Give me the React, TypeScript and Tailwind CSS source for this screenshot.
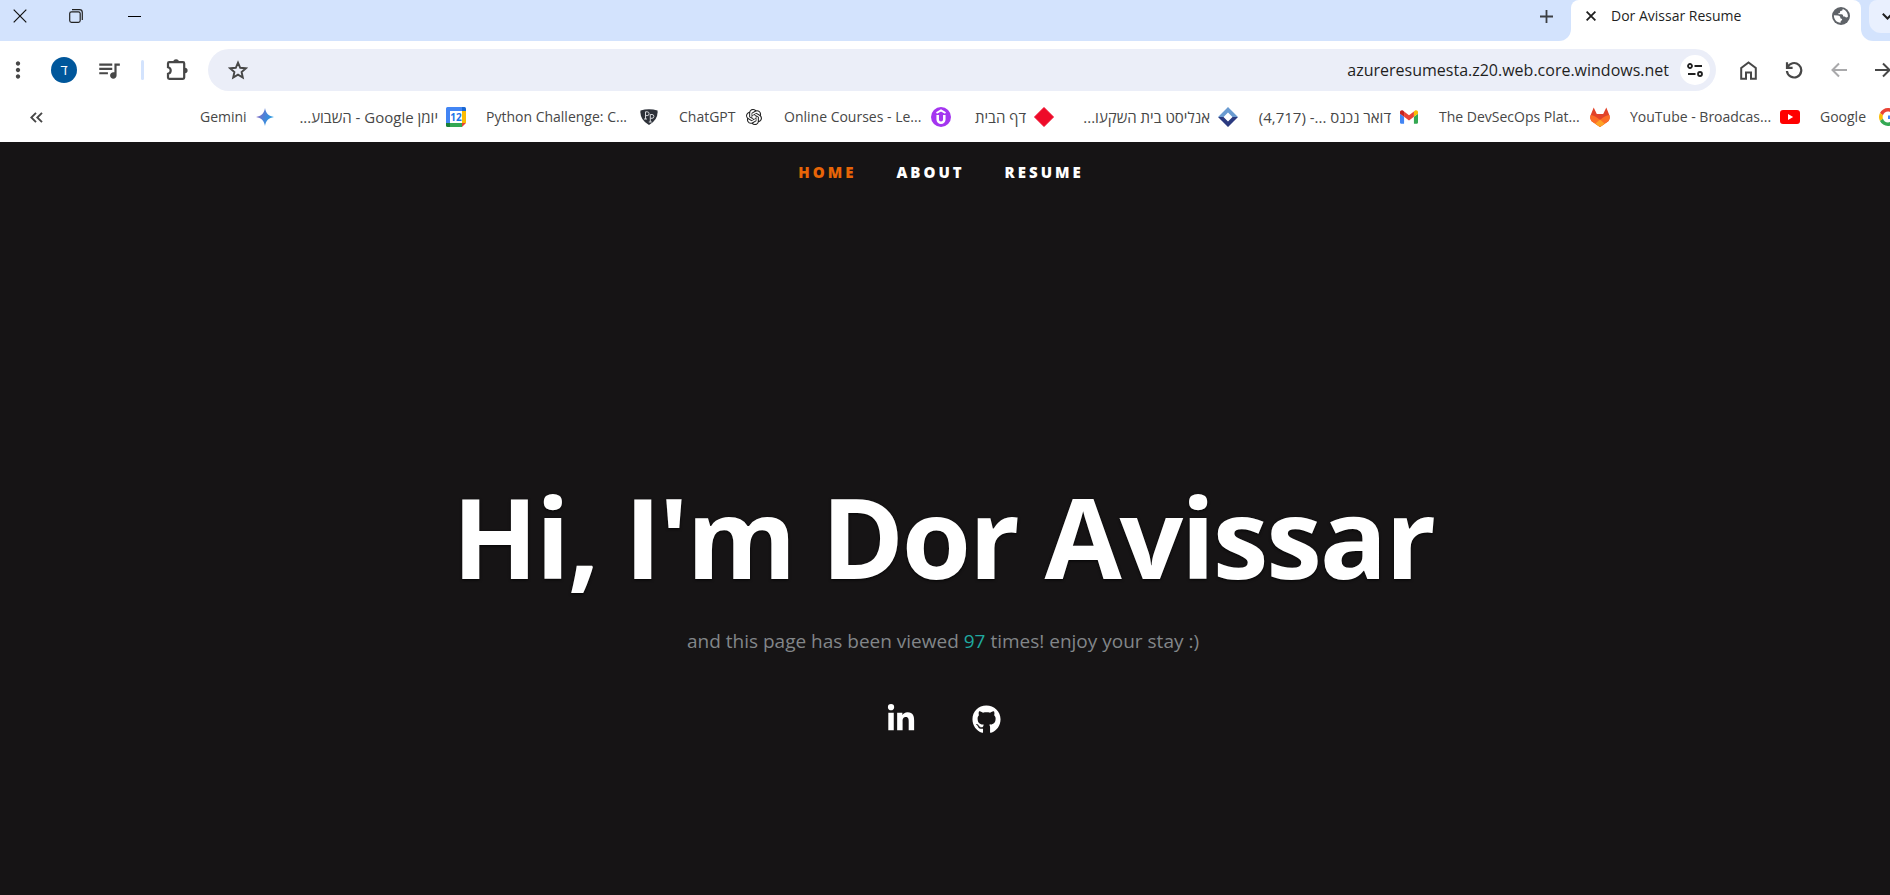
import type { ReactNode } from 'react';
import { FaGithub, FaLinkedinIn } from 'react-icons/fa';
import { MdMoreVert, MdQueueMusic } from 'react-icons/md';
import { SiOpenai } from 'react-icons/si';

function WindowControls() {
  return (
    <div className="flex h-8 items-center">
      <button aria-label="Close window" className="flex h-8 w-10 items-center justify-center">
        <svg width="14" height="14" viewBox="0 0 14 14" fill="none" stroke="#111" strokeWidth="1.2">
          <path d="M.7.7l12.6 12.6M13.3.7L.7 13.3" />
        </svg>
      </button>
      <button aria-label="Restore window" className="ml-4 flex h-8 w-10 items-center justify-center">
        <svg width="14" height="14" viewBox="0 0 14 14" fill="none" stroke="#222" strokeWidth="1.2">
          <rect x=".7" y="2.8" width="10.5" height="10.5" rx="1.8" />
          <path d="M3 .7h7.5a2.8 2.8 0 0 1 2.8 2.8V11" />
        </svg>
      </button>
      <button aria-label="Minimize window" className="ml-4 flex h-8 w-11 items-center justify-center">
        <span className="h-px w-[13px] bg-black" />
      </button>
    </div>
  );
}

function GlobeIcon() {
  return (
    <svg width="18" height="18" viewBox="0 0 18 18">
      <circle cx="9" cy="9" r="9" fill="#5f6368" />
      <path
        fill="#fff"
        d="M10.6 1.9c.2 1-.3 1.8-1.2 1.9-1 .1-1.5.6-1.4 1.4.1.7-.7 1-1.4 1.1-.6.1-.5.8.2.9h2.7c1.3 0 1.5.9 1.6 1.7.1.7.8.6 1.5.7.7.1.8.9 1.5 1 .7.1 1.2-.3 1.8-.8.4-2.9-1.5-6.9-5.3-7.9zM1.9 8.3l3.9.1c1.7.1 2.6.9 2.5 2.2 0 .9.5 1.1 1.2 1.1.9.1.8 1.3.1 1.7-.8.4-1.1 1-1 2.4C4.7 15.7 1.7 12.3 1.9 8.3z"
      />
    </svg>
  );
}

function TabStrip() {
  return (
    <div className="flex h-[41px] bg-white">
      <div className="flex flex-1 justify-between rounded-br-xl bg-[#d3e3fd]">
        <WindowControls />
        <button aria-label="New tab" className="mr-4 flex h-8 w-[18px] items-center justify-center">
          <svg width="13" height="13" viewBox="0 0 13 13" stroke="#3c3f43" strokeWidth="1.8">
            <path d="M6.5 0v13M0 6.5h13" />
          </svg>
        </button>
      </div>
      <div className="w-[290px] bg-[linear-gradient(#d3e3fd_50%,#fff_50%)]">
        <div className="flex h-full items-start rounded-t-lg bg-white pr-[11px] pl-[15px]">
          <button aria-label="Close tab" className="flex h-8 w-[10px] items-center justify-center">
            <svg width="10" height="10" viewBox="0 0 10 10" stroke="#1f1f1f" strokeWidth="1.8">
              <path d="M.6.6l8.8 8.8M9.4.6L.6 9.4" />
            </svg>
          </button>
          <span className="ml-[15px] flex-1 text-sm leading-8 text-[#1f1f1f]">Dor Avissar Resume</span>
          <span className="flex h-8 items-center">
            <GlobeIcon />
          </span>
        </div>
      </div>
      <div className="w-[29px] overflow-hidden rounded-bl-xl bg-[#d3e3fd] pl-2">
        <button aria-label="Search tabs" className="flex h-[33px] w-9 items-center justify-center rounded-xl rounded-t-lg bg-[#e9f0fe]">
          <svg width="11" height="7" viewBox="0 0 11 7" fill="none" stroke="#1f1f1f" strokeWidth="2">
            <path d="M.8.8l4.7 4.7L10.2.8" />
          </svg>
        </button>
      </div>
    </div>
  );
}

function ExtensionsIcon() {
  return (
    <svg width="22" height="22" viewBox="0 0 22 22">
      <path
        d="M3.2 3.2H17a1.2 1.2 0 0 1 1.2 1.2v14.2a1.2 1.2 0 0 1-1.2 1.2H3.2A1.2 1.2 0 0 1 2 18.6v-3.8c3.6-.8 3.6-5.8 0-6.6V4.4a1.2 1.2 0 0 1 1.2-1.2z"
        fill="none"
        stroke="#474747"
        strokeWidth="2.2"
      />
      <path d="M7.3 3a2.8 2.8 0 0 1 5.6 0zM18.8 8.7a2.8 2.8 0 0 1 0 5.6z" fill="#474747" />
    </svg>
  );
}

function Toolbar() {
  return (
    <div className="flex h-[58px] items-center overflow-hidden text-[#474747]">
      <button aria-label="Menu" className="ml-[6px] flex w-6 justify-center">
        <MdMoreVert size={26} className="shrink-0" />
      </button>
      <button
        aria-label="Profile"
        className="ml-[21px] flex size-[26px] shrink-0 items-center justify-center rounded-full bg-[#00579b] text-sm text-white"
      >
        ד
      </button>
      <button aria-label="Media" className="ml-5 flex w-6 justify-center">
        <MdQueueMusic size={26} className="shrink-0" />
      </button>
      <span className="ml-5 h-5 w-[3px] rounded-full bg-[#d3e3fd]" />
      <button aria-label="Extensions" className="ml-[22px]">
        <ExtensionsIcon />
      </button>
      <div className="ml-5 flex h-[42px] flex-1 items-center rounded-full bg-[#ebeef8] pr-[6px] pl-5">
        <button aria-label="Bookmark this page">
          <svg width="20" height="20" viewBox="0 0 20 20" fill="none" stroke="#474747" strokeWidth="1.9">
            <path d="M10 2.6l2.2 5.2 5.6.5-4.2 3.700 1.200 5.500L10 14.600l-4.800 2.900 1.200-5.500L2.200 8.300l5.600-.5z" />
          </svg>
        </button>
        <input
          aria-label="Address"
          dir="ltr"
          defaultValue="azureresumesta.z20.web.core.windows.net"
          className="mr-[11px] min-w-0 flex-1 bg-transparent text-right text-base text-[#1f1f1f] outline-none"
        />
        <button aria-label="Site information" className="flex size-[30px] items-center justify-center rounded-full bg-white">
          <svg width="16" height="14" viewBox="0 0 16 14" fill="none" stroke="#1f1f1f" strokeWidth="1.8">
            <circle cx="3" cy="3" r="2" />
            <path d="M7.5 3H15M1 11h7.5" />
            <circle cx="13" cy="11" r="2" />
          </svg>
        </button>
      </div>
      <div className="-mr-px ml-6 flex items-center gap-7">
        <button aria-label="Home">
          <svg width="17" height="19" viewBox="0 0 17 19" fill="none" stroke="#474747" strokeWidth="2">
            <path d="M1.2 7L8.5 1.4 15.8 7v10.8H11V11.5H6v6.3H1.2z" />
          </svg>
        </button>
        <button aria-label="Reload">
          <svg width="18" height="18" viewBox="0 0 18 18" fill="none" stroke="#474747" strokeWidth="2.2">
            <path d="M2 1.2v5.6h5.6M2.4 6.5A7.2 7.2 0 1 1 1.9 10" />
          </svg>
        </button>
        <button aria-label="Back">
          <svg width="16" height="16" viewBox="0 0 16 16" fill="none" stroke="#a9a9ab" strokeWidth="2">
            <path d="M16 8H2M8 1.5L1.5 8 8 14.5" />
          </svg>
        </button>
        <button aria-label="Forward">
          <svg width="16" height="16" viewBox="0 0 16 16" fill="none" stroke="#474747" strokeWidth="2">
            <path d="M0 8h14M8 1.5L14.5 8 8 14.5" />
          </svg>
        </button>
      </div>
    </div>
  );
}

const geminiIcon = (
  <svg width="18" height="18" viewBox="0 0 18 18">
    <defs>
      <linearGradient id="gemini" x1="0" x2="1" y1="0.3" y2="0.7">
        <stop offset="0" stopColor="#9168c0" />
        <stop offset=".45" stopColor="#4c82d8" />
        <stop offset="1" stopColor="#1ba1e3" />
      </linearGradient>
    </defs>
    <path fill="url(#gemini)" d="M9 0c.8 5.2 3.8 8.2 9 9-5.2.8-8.2 3.8-9 9-.8-5.2-3.8-8.2-9-9 5.2-.8 8.2-3.8 9-9z" />
  </svg>
);

const calendarIcon = (
  <svg width="20" height="20" viewBox="0 0 20 20">
    <path fill="#4285f4" d="M1.5 0H16v4H4v12H0V1.5A1.5 1.5 0 0 1 1.5 0z" />
    <path fill="#1967d2" d="M16 0h2.5A1.5 1.5 0 0 1 20 1.5V4h-4z" />
    <path fill="#fbbc04" d="M16 4h4v12h-4z" />
    <path fill="#34a853" d="M4 16h12v4H4z" />
    <path fill="#188038" d="M0 16h4v4H1.5A1.5 1.5 0 0 1 0 18.5z" />
    <path fill="#ea4335" d="M16 16h4l-4 4z" />
    <path fill="#fff" d="M4 4h12v12H4z" />
    <text x="10" y="14" textAnchor="middle" fontSize="10" fontWeight="700" fill="#1a73e8">
      12
    </text>
  </svg>
);

const pythonChallengeIcon = (
  <svg width="18" height="16" viewBox="0 0 18 16">
    <path fill="#2d3139" d="M.5 1.5Q9-1 17.5 1.5q1 9-8.5 14.5Q-.5 10.5.5 1.5z" />
    <path
      fill="none"
      stroke="#d5d7db"
      strokeWidth="1"
      d="M5.5 10V2.8h1.7a1.9 1.9 0 0 1 0 3.8H5.5M10.3 13V5.5H12a1.9 1.9 0 0 1 0 3.8h-1.7M4 10h3M8.8 13h3"
    />
  </svg>
);

const udemyIcon = (
  <svg width="20" height="20" viewBox="0 0 20 20">
    <circle cx="10" cy="10" r="10" fill="#a435f0" />
    <path fill="none" stroke="#fff" strokeWidth="2" d="M5.5 6L10 3.5 14.5 6" />
    <path fill="none" stroke="#fff" strokeWidth="2.5" d="M6.7 8v4.5a3.3 3.3 0 0 0 6.6 0V8" />
  </svg>
);

const redDiamondIcon = (
  <svg width="20" height="20" viewBox="0 0 20 20">
    <path fill="#ee0a29" d="M10 .5l9.5 9.5-9.5 9.5L.5 10z" stroke="#ee0a29" strokeLinejoin="round" />
  </svg>
);

const blueDiamondIcon = (
  <svg width="20" height="20" viewBox="0 0 20 20">
    <path fill="#6a9bd1" d="M10 0l10 10h-5.5L10 5.5 5.5 10H0z" />
    <path fill="#2b3a80" d="M0 10h5.5l4.5 4.5 4.5-4.5H20L10 20z" />
  </svg>
);

const gmailIcon = (
  <svg width="18" height="14" viewBox="52 42 88 66">
    <path fill="#4285f4" d="M58 108h14V74L52 59v43c0 3.32 2.69 6 6 6" />
    <path fill="#34a853" d="M120 108h14c3.32 0 6-2.69 6-6V59l-20 15" />
    <path fill="#fbbc04" d="M120 48v26l20-15v-8c0-7.42-8.47-11.65-14.4-7.2" />
    <path fill="#ea4335" d="M72 74V48l24 18 24-18v26L96 92" />
    <path fill="#c5221f" d="M52 51v8l20 15V48l-5.6-4.2c-5.94-4.45-14.4-.22-14.4 7.2" />
  </svg>
);

const gitlabIcon = (
  <svg width="20" height="20" viewBox="0 0 20 20">
    <path fill="#e24329" d="M3.7.5L6.8 7h6.4L16.3.5l3 7.5c1 3 .2 5.5-2 7L10 20l-7.3-5C.5 13.5-.3 11 .7 8z" />
    <path fill="#fc6d26" d="M.7 8c3 .3 6 2.2 9.3 5 3.3-2.8 6.3-4.7 9.3-5 1 3 .2 5.5-2 7L10 20l-7.3-5C.5 13.5-.3 11 .7 8z" />
    <path fill="#fca326" d="M10 12.5l4.8 4.2L10 20l-4.8-3.3z" />
  </svg>
);

const youtubeIcon = (
  <svg width="20" height="14" viewBox="0 0 20 14">
    <rect width="20" height="14" rx="3" fill="#f00" />
    <path fill="#fff" d="M8 4l5.2 3L8 10z" />
  </svg>
);

const googleIcon = (
  <svg width="18" height="18" viewBox="0 0 48 48">
    <path fill="#EA4335" d="M24 9.5c3.54 0 6.71 1.22 9.21 3.6l6.85-6.85C35.9 2.38 30.47 0 24 0 14.62 0 6.51 5.38 2.56 13.22l7.98 6.19C12.43 13.72 17.74 9.5 24 9.5z" />
    <path fill="#4285F4" d="M46.98 24.55c0-1.57-.15-3.09-.38-4.55H24v9.02h12.94c-.58 2.96-2.26 5.48-4.78 7.18l7.73 6c4.51-4.18 7.09-10.36 7.09-17.65z" />
    <path fill="#FBBC05" d="M10.53 28.59c-.48-1.45-.76-2.99-.76-4.59s.27-3.14.76-4.59l-7.98-6.19C.92 16.46 0 20.12 0 24s.92 7.54 2.56 10.78l7.97-6.19z" />
    <path fill="#34A853" d="M24 48c6.48 0 11.93-2.13 15.89-5.81l-7.73-6c-2.15 1.45-4.92 2.3-8.16 2.3-6.26 0-11.57-4.22-13.47-9.91l-7.98 6.19C6.51 42.62 14.62 48 24 48z" />
  </svg>
);

type Bookmark = { label: string; icon: ReactNode; width: string; rtl?: boolean };

const bookmarks: Bookmark[] = [
  { label: 'Gemini', icon: geminiIcon, width: 'w-[47px]' },
  { label: 'יומן Google - השבוע...', icon: calendarIcon, width: 'w-[143px]', rtl: true },
  { label: 'Python Challenge: C...', icon: pythonChallengeIcon, width: 'w-[145px]' },
  { label: 'ChatGPT', icon: <SiOpenai size={16} color="#222" />, width: 'w-[57px]' },
  { label: 'Online Courses - Le...', icon: udemyIcon, width: 'w-[139px]' },
  { label: 'דף הבית', icon: redDiamondIcon, width: 'w-[55px]', rtl: true },
  { label: 'אנליסט בית השקעו...', icon: blueDiamondIcon, width: 'w-[136px]', rtl: true },
  { label: 'דואר נכנס ...- (4,717)', icon: gmailIcon, width: 'w-[133px]', rtl: true },
  { label: 'The DevSecOps Plat...', icon: gitlabIcon, width: 'w-[143px]' },
  { label: 'YouTube - Broadcas...', icon: youtubeIcon, width: 'w-[142px]' },
  { label: 'Google', icon: googleIcon, width: 'w-[50px]' },
];

function BookmarksBar() {
  return (
    <div className="flex h-[43px] items-start justify-between overflow-hidden text-[#474747]">
      <button aria-label="More bookmarks" className="ml-[30px] flex h-9 items-center">
        <svg width="13" height="11" viewBox="0 0 13 11" fill="none" stroke="#474747" strokeWidth="1.9">
          <path d="M6 .8L1.3 5.5 6 10.2M12 .8L7.3 5.5 12 10.2" />
        </svg>
      </button>
      <nav aria-label="Bookmarks" className="-mr-2 flex gap-5">
        {bookmarks.map(({ label, icon, width, rtl }) => (
          <a key={label} href="#" className="flex h-9 items-center gap-2">
            <span
              dir={rtl ? 'rtl' : 'ltr'}
              className={`${width} leading-5 whitespace-nowrap ${rtl ? 'text-[15px]' : 'text-[14px]'}`}
            >
              {label}
            </span>
            <span className="flex w-5 shrink-0 justify-center">{icon}</span>
          </a>
        ))}
      </nav>
    </div>
  );
}

const navLink = 'hover:text-[#e86507]';

export default function App() {
  return (
    <div className="flex min-h-screen flex-col overflow-x-hidden bg-white font-['Open_Sans','Noto_Sans','DejaVu_Sans',sans-serif]">
      <header>
        <TabStrip />
        <Toolbar />
        <BookmarksBar />
      </header>
      <main className="flex flex-1 flex-col items-center bg-[#161415] pr-1 text-white">
        <nav aria-label="Sections" className="mt-5 mr-1 flex gap-10 text-[15px] leading-5 font-extrabold tracking-[3px]">
          <a href="#home" className="text-[#e86507]">HOME</a>
          <a href="#about" className={navLink}>ABOUT</a>
          <a href="#resume" className={navLink}>RESUME</a>
        </nav>
        <h1 className="mt-[289px] text-[112px] leading-[130px] font-bold tracking-[-0.02em] whitespace-nowrap [text-shadow:0_1px_3px_rgba(0,0,0,0.8)]">
          Hi, I'm Dor Avissar
        </h1>
        <p className="mt-[22px] text-[19px] leading-[36px] text-[#828689]">
          and this page has been viewed <span className="text-[#20a89f]">97</span> times! enjoy your stay :)
        </p>
        <div className="mt-[45px] flex items-center gap-14">
          <a href="#linkedin" aria-label="LinkedIn">
            <FaLinkedinIn size={30} />
          </a>
          <a href="#github" aria-label="GitHub">
            <FaGithub size={29} />
          </a>
        </div>
      </main>
    </div>
  );
}
